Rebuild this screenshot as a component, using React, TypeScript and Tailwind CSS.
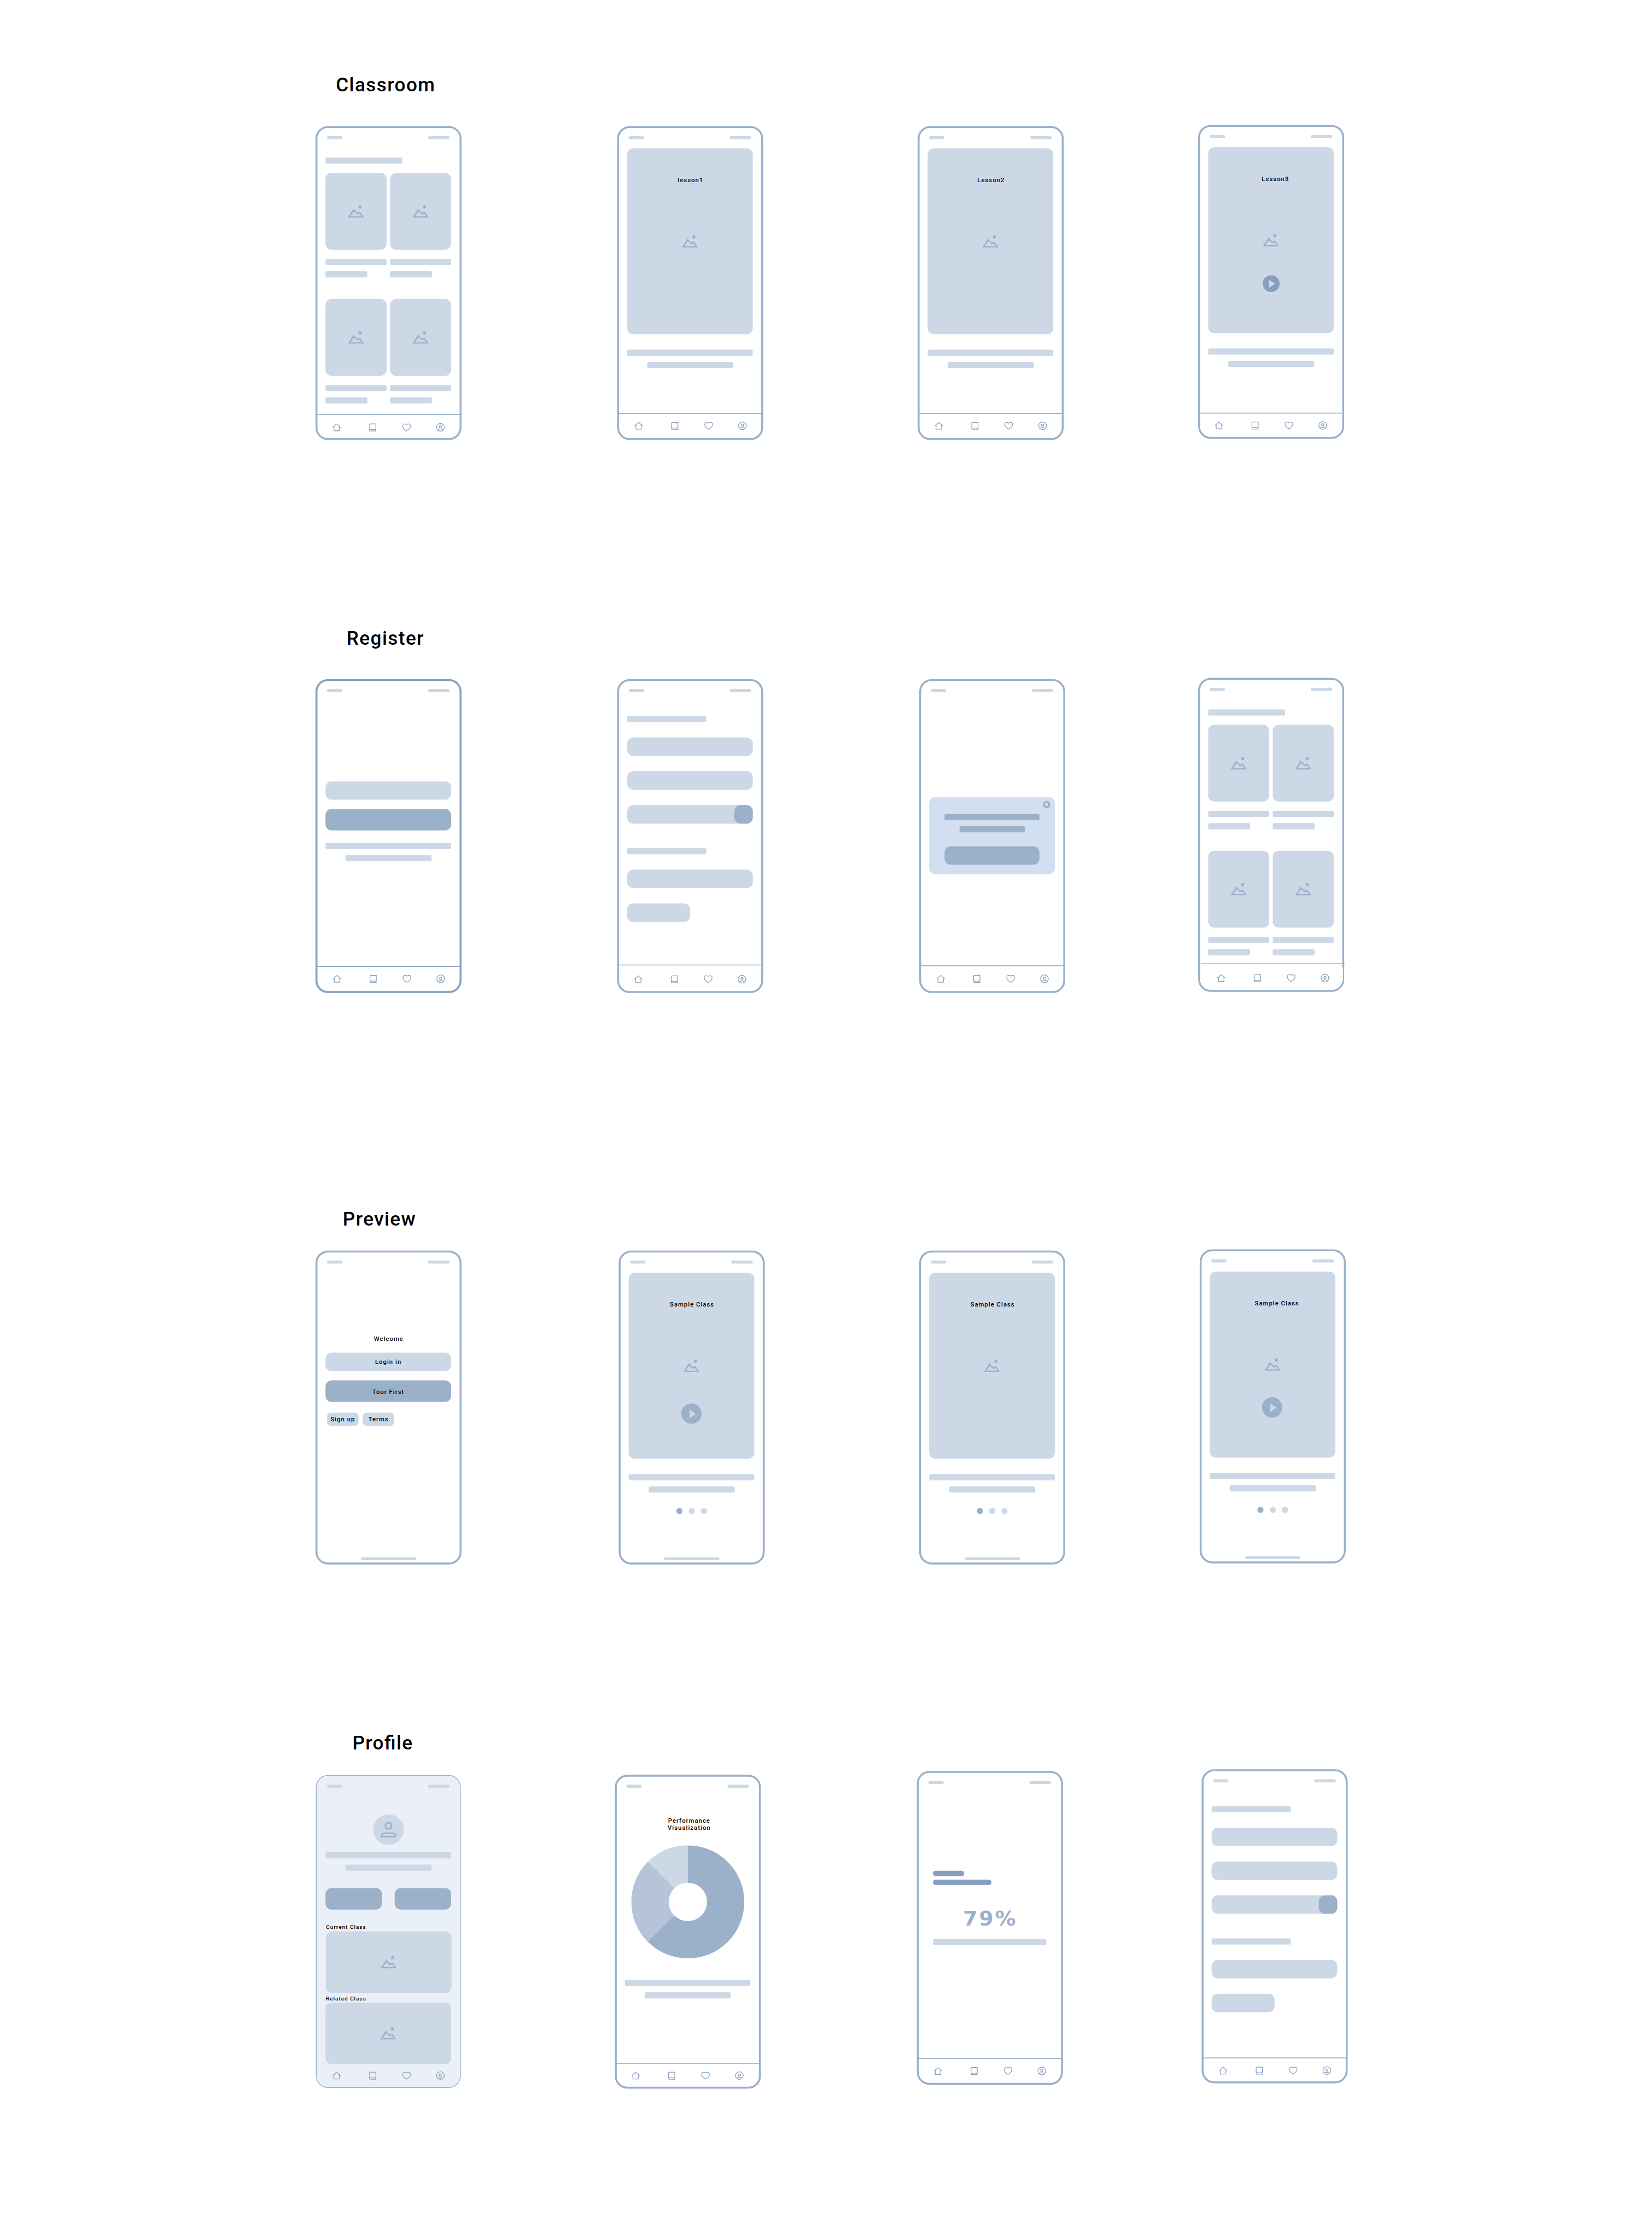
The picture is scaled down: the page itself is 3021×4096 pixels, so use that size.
import type { ReactNode } from "react";
import clsx from "clsx";

/* ---------- icons ---------- */

function PictureIcon() {
  return (
    <svg className="h-[32.6px] w-[42.8px] shrink-0 fill-[#9bb0c9]" viewBox="0 0 42.8 32.6">
      <path
        fillRule="evenodd"
        d="M0 32.6 14.8 9.2 25.2 19.7 31.5 16.3 42.8 32.6ZM6.6 28.7H36.2L30.4 21.1 25 24.2 16 15.6Z"
      />
      <circle cx="31.8" cy="4.1" r="4.1" />
    </svg>
  );
}

function HomeIcon() {
  return (
    <svg className="size-6 fill-none stroke-[#859fbd] stroke-[1.8]" viewBox="0 0 24 24">
      <path d="M1.7 12.2 12 3.2l10.3 9" />
      <path d="M4.9 9.8V21h14.2V9.8" />
    </svg>
  );
}

function BookIcon() {
  return (
    <svg className="size-6 fill-none stroke-[#859fbd] stroke-[1.8]" viewBox="0 0 24 24">
      <path d="M20.2 17.6V3.1H5.6a1.7 1.7 0 0 0-1.7 1.7v14.8" />
      <path d="M21.1 17.6H5.9a1.9 1.9 0 0 0 0 3.8h15.2M19 17.6v3.8" />
    </svg>
  );
}

function HeartIcon() {
  return (
    <svg className="size-6 fill-none stroke-[#859fbd] stroke-[1.8]" viewBox="0 0 24 24">
      <path d="M12 20.9C8 18.8 1.9 14 1.9 8.6 1.9 5 4.6 3 7.5 3c1.8 0 3.3.8 4.5 2.1C13.2 3.8 14.7 3 16.5 3c2.9 0 5.600 2 5.600 5.600C22.100 14 16 18.800 12 20.900Z" />
    </svg>
  );
}

function AccountIcon() {
  return (
    <svg className="size-6 fill-none stroke-[#859fbd] stroke-[1.8]" viewBox="0 0 24 24">
      <circle cx="12" cy="12" r="10.1" />
      <circle cx="12" cy="10.4" r="2.9" />
      <path d="M5 19c1.7-1.7 4.3-2.5 7-2.5s5.300.8 7 2.500" />
    </svg>
  );
}

function Avatar() {
  return (
    <svg className="size-20" viewBox="0 0 80 80">
      <circle cx="40" cy="40" r="40" fill="#ccd8e6" />
      <circle cx="40" cy="30" r="8.2" fill="none" stroke="#9bb0c9" strokeWidth="4" />
      <path
        fill="#9bb0c9"
        fillRule="evenodd"
        d="M20 60V50.5Q40 42.3 60 50.5V60ZM24 56.2H56V53.2Q40 47 24 53.2Z"
      />
    </svg>
  );
}

function PlayIcon({ large = false }: { large?: boolean }) {
  return large ? (
    <svg className="size-[53px]" viewBox="0 0 53 53">
      <circle cx="26.5" cy="26.5" r="26.5" fill="#9bb0c9" />
      <path d="M21.5 15.8 38 27 21.5 38.2Z" fill="#ccd8e6" />
    </svg>
  ) : (
    <svg className="size-11" viewBox="0 0 44 44">
      <circle cx="22" cy="22" r="22" fill="#859fbd" />
      <path d="M16.2 11.4 32 22.2 16.2 33Z" fill="#ccd8e6" />
    </svg>
  );
}

function CloseIcon() {
  return (
    <svg className="size-[19px]" viewBox="0 0 19 19">
      <circle cx="9.5" cy="9.5" r="9.5" fill="#9bb0c9" />
      <path d="m6 6 6.5 6.5M12.5 6 6 12.5" stroke="#fff" strokeWidth="1.9" />
    </svg>
  );
}

/* ---------- building blocks ---------- */

function Bar({ className }: { className: string }) {
  return <div className={clsx("h-4 shrink-0 rounded-[4px] bg-[#ccd8e6]", className)} />;
}

function Block({ className }: { className: string }) {
  return <div className={clsx("shrink-0 rounded-2xl", className)} />;
}

function Label({ className, children }: { className?: string; children: ReactNode }) {
  return (
    <p
      className={clsx(
        "text-base leading-[20px] font-medium tracking-[1.5px] whitespace-nowrap text-black",
        className,
      )}
    >
      {children}
    </p>
  );
}

function TabBar({ className, iconsTop = "pt-[19.5px]" }: { className: string; iconsTop?: string }) {
  return (
    <nav
      className={clsx(
        "absolute flex w-[373px] gap-16 border-t-2 border-[#859fbd] pl-10",
        iconsTop,
        className,
      )}
    >
      <HomeIcon />
      <div className="ml-1.5">
        <BookIcon />
      </div>
      <HeartIcon />
      <AccountIcon />
    </nav>
  );
}

type PhoneProps = {
  className?: string;
  frame?: string;
  nav?: ReactNode;
  home?: boolean;
  children: ReactNode;
};

function Phone({
  className,
  frame = "-inset-[2.5px] rounded-[32.5px] border-[5px] border-[#9bb0c9]",
  nav,
  home = false,
  children,
}: PhoneProps) {
  return (
    <article
      className={clsx("relative flex h-[812px] w-[375px] shrink-0 flex-col rounded-[30px]", className)}
    >
      <div className="flex justify-between px-7 pt-6">
        <div className="h-2 w-10 rounded-full bg-[#ccd8e6]" />
        <div className="h-2 w-14 rounded-full bg-[#ccd8e6]" />
      </div>
      <div className="flex flex-1 flex-col px-6">{children}</div>
      {home && <div className="mb-2 ml-[116px] h-2 w-36 rounded-full bg-[#ccd8e6]" />}
      <div className={clsx("pointer-events-none absolute", frame)} />
      {nav}
    </article>
  );
}

function TwoLines({ className }: { className?: string }) {
  return (
    <div className={className}>
      <Bar className="w-[327px]" />
      <Bar className="mt-4 ml-[52px] w-56" />
    </div>
  );
}

/* ---------- screens ---------- */

function Gallery() {
  return (
    <>
      <Bar className="mt-12 w-[200px]" />
      <div className="mt-6 grid grid-cols-2 gap-x-[9px] gap-y-14">
        {[0, 1, 2, 3].map((card) => (
          <div key={card}>
            <div className="flex h-[200px] items-center justify-center rounded-2xl bg-[#ccd8e6]">
              <PictureIcon />
            </div>
            <Bar className="mt-6" />
            <Bar className="mt-4 w-[109px]" />
          </div>
        ))}
      </div>
    </>
  );
}

type LessonProps = {
  title: string;
  titleShift?: string;
  play?: ReactNode;
  dots?: boolean;
};

function Lesson({ title, titleShift = "ml-[3px]", play, dots = false }: LessonProps) {
  return (
    <>
      <div className="mt-6 flex h-[484px] shrink-0 flex-col items-center rounded-2xl bg-[#ccd8e6] pt-[73px]">
        <Label className={titleShift}>{title}</Label>
        <div className="mt-[132.5px]">
          <PictureIcon />
        </div>
        {play}
      </div>
      <TwoLines className="mt-10" />
      {dots && (
        <div className="mt-10 flex justify-center gap-4">
          <div className="size-4 rounded-full bg-[#9bb0c9]" />
          <div className="size-4 rounded-full bg-[#ccd8e6]" />
          <div className="size-4 rounded-full bg-[#ccd8e6]" />
        </div>
      )}
    </>
  );
}

function SignIn() {
  return (
    <>
      <Block className="mt-[232px] h-12 bg-[#ccd8e6]" />
      <Block className="mt-6 h-14 bg-[#9bb0c9]" />
      <TwoLines className="mt-8" />
    </>
  );
}

function Form() {
  return (
    <>
      <Bar className="mt-[62px] w-[206px]" />
      <Block className="mt-10 h-12 bg-[#ccd8e6]" />
      <Block className="mt-10 h-12 bg-[#ccd8e6]" />
      <div className="mt-10 flex h-12 justify-end rounded-2xl bg-[#ccd8e6]">
        <Block className="size-12 bg-[#9bb0c9]" />
      </div>
      <Bar className="mt-16 w-[206px]" />
      <Block className="mt-10 h-12 bg-[#ccd8e6]" />
      <Block className="mt-10 h-12 w-[164px] bg-[#ccd8e6]" />
    </>
  );
}

function Dialog() {
  return (
    <div className="mt-[273px] flex h-[201px] flex-col rounded-2xl bg-[#d2dff0] px-10 pt-2.5">
      <div className="-mr-7 self-end">
        <CloseIcon />
      </div>
      <div className="mt-[15px] h-4 rounded-[4px] bg-[#9bb0c9]" />
      <div className="mx-auto mt-4 h-4 w-[170px] rounded-[4px] bg-[#9bb0c9]" />
      <Block className="mt-9 h-12 bg-[#9bb0c9]" />
    </div>
  );
}

function Welcome() {
  return (
    <>
      <Label className="mt-[186.5px] ml-0.5 text-center">Welcome</Label>
      <div className="mt-[25.5px] flex h-12 items-center justify-center rounded-2xl bg-[#ccd8e6]">
        <Label>Login in</Label>
      </div>
      <div className="mt-6 flex h-14 items-center justify-center rounded-2xl bg-[#9bb0c9] pt-[5px]">
        <Label>Tour First</Label>
      </div>
      <div className="mt-7 ml-1 flex gap-[11px]">
        <div className="flex h-[34px] w-[82px] items-center justify-center rounded-[10px] bg-[#ccd8e6] pt-[2px]">
          <Label>Sign up</Label>
        </div>
        <div className="flex h-[34px] w-[82px] items-center justify-center rounded-[10px] bg-[#ccd8e6] pt-[2px]">
          <Label>Terms</Label>
        </div>
      </div>
    </>
  );
}

function Profile() {
  return (
    <>
      <div className="mt-[69px] ml-[124px]">
        <Avatar />
      </div>
      <TwoLines className="mt-[19px]" />
      <div className="mt-[45px] flex justify-between">
        <Block className="h-14 w-[147px] bg-[#9bb0c9]" />
        <Block className="h-14 w-[147px] bg-[#9bb0c9]" />
      </div>
      <p className="mt-[35px] ml-[1.5px] text-[14px] leading-[20px] font-medium tracking-[1.5px]">
        Current Class
      </p>
      <div className="mt-[2px] -mr-px ml-px flex h-40 items-center justify-center rounded-2xl bg-[#ccd8e6]">
        <PictureIcon />
      </div>
      <p className="mt-[4px] ml-px text-[14px] leading-[20px] font-medium tracking-[1.5px]">
        Related Class
      </p>
      <div className="mt-px flex h-40 items-center justify-center rounded-2xl bg-[#ccd8e6]">
        <PictureIcon />
      </div>
    </>
  );
}

function Performance() {
  return (
    <>
      <p className="mt-[77px] ml-[8px] text-center text-base leading-[18.75px] font-medium tracking-[1.5px]">
        Performance
        <br />
        Visualization
      </p>
      <svg className="mt-[35.5px] ml-[17px] size-[294px]" viewBox="-147 -147 294 294">
        <circle r="147" fill="#9bb0c9" />
        <path d="M0 0-103.94 103.94A147 147 0 0 1-103.94-103.94Z" fill="#b5c4d8" />
        <path d="M0 0-103.94-103.94A147 147 0 0 1 0-147Z" fill="#ccd8e6" />
        <circle r="50" fill="#fff" />
      </svg>
      <TwoLines className="mt-14" />
    </>
  );
}

function Score() {
  return (
    <div className="px-4">
      <div className="mt-[226px] h-3.5 w-[81px] rounded-full bg-[#859fbd]" />
      <div className="mt-[9px] h-3.5 w-[152px] rounded-full bg-[#859fbd]" />
      <p className="mt-[60px] ml-[78px] font-['DejaVu_Sans',sans-serif] text-[54px] leading-[56px] font-bold tracking-[4px] text-[#9bb0c9]">
        79%
      </p>
      <Bar className="mt-[24px] w-[295px]" />
    </div>
  );
}

function Title({ className, children }: { className: string; children: ReactNode }) {
  return (
    <h2
      className={clsx(
        "text-[50px] leading-[48px] font-medium tracking-[2px] [font-feature-settings:'liga'_1]",
        className,
      )}
    >
      {children}
    </h2>
  );
}

function Row({ className, children }: { className: string; children: ReactNode }) {
  return <div className={clsx("flex items-start pl-[823px]", className)}>{children}</div>;
}

export default function App() {
  return (
    <div className="h-[4096px] w-[3021px] overflow-hidden bg-white">
      <main className="flex h-[5829px] w-[4299px] origin-top-left scale-[0.70272] flex-col bg-white pt-[196.5px] font-['Roboto',sans-serif] text-black">
        <Title className="ml-[874px]">Classroom</Title>
        <Row className="mt-[82.5px]">
          <Phone className="mt-[3px]" nav={<TabBar className="top-[748px] left-px" />}>
            <Gallery />
          </Phone>
          <Phone className="mt-[3px] ml-[410px]" nav={<TabBar className="top-[744.5px] left-[2px]" />}>
            <Lesson title="lesson1" />
          </Phone>
          <Phone className="mt-[3px] ml-[407px]" nav={<TabBar className="top-[744.5px] left-px" />}>
            <Lesson title="Lesson2" />
          </Phone>
          <Phone className="ml-[355px]" nav={<TabBar className="top-[746.5px] left-0" />}>
            <Lesson
              title="Lesson3"
              titleShift="ml-[23px]"
              play={
                <div className="mt-[75px]">
                  <PlayIcon />
                </div>
              }
            />
          </Phone>
        </Row>

        <Title className="mt-[494.5px] ml-[902px]">Register</Title>
        <Row className="mt-[81.5px]">
          <Phone
            className="mt-[3px]"
            frame="-inset-[2.5px] rounded-[32.5px] border-[5px] border-[#859fbd]"
            nav={<TabBar className="top-[744.5px] left-[2px]" />}
          >
            <SignIn />
          </Phone>
          <Phone
            className="mt-[3px] ml-[410px]"
            nav={<TabBar className="top-[740.5px] left-px" iconsTop="pt-[24.5px]" />}
          >
            <Form />
          </Phone>
          <Phone
            className="mt-[3px] ml-[411px]"
            nav={<TabBar className="top-[742.5px] left-[2px]" iconsTop="pt-[21.5px]" />}
          >
            <Dialog />
          </Phone>
          <Phone
            className="ml-[351px]"
            nav={
              <>
                <div className="absolute top-[741px] left-[200px] h-[68px] w-[175px] rounded-tr-[18px] rounded-br-[30px] bg-white" />
                <TabBar className="top-[740.5px] left-[6px]" iconsTop="pt-[24.5px]" />
              </>
            }
          >
            <Gallery />
          </Phone>
        </Row>

        <Title className="mt-[566.5px] ml-[892px]">Preview</Title>
        <Row className="mt-[57.5px]">
          <Phone className="mt-[3px]" home>
            <Welcome />
          </Phone>
          <Phone className="mt-[3px] ml-[414px]" home>
            <Lesson
              title="Sample Class"
              dots
              play={
                <div className="mt-[82px]">
                  <PlayIcon large />
                </div>
              }
            />
          </Phone>
          <Phone className="mt-[3px] ml-[407px]" home>
            <Lesson title="Sample Class" dots />
          </Phone>
          <Phone className="ml-[355px]" home>
            <Lesson
              title="Sample Class"
              titleShift="ml-[23px]"
              dots
              play={
                <div className="mt-[69px] mr-[2px]">
                  <PlayIcon large />
                </div>
              }
            />
          </Phone>
        </Row>

        <Title className="mt-[442.5px] ml-[917px]">Profile</Title>
        <Row className="mt-[47.5px]">
          <Phone
            className="mt-[14px] bg-[#ebf0f8]"
            frame="-inset-px rounded-[31px] border-2 border-[#9bb0c9]"
            nav={<TabBar className="top-[747px] left-px border-transparent" />}
          >
            <Profile />
          </Phone>
          <Phone className="mt-[14px] ml-[404px]" nav={<TabBar className="top-[747.5px] left-0" />}>
            <Performance />
          </Phone>
          <Phone className="mt-[4px] ml-[411px]" nav={<TabBar className="top-[745.5px] left-px" />}>
            <Score />
          </Phone>
          <Phone className="ml-[366px]" nav={<TabBar className="top-[748px] left-[2px]" />}>
            <Form />
          </Phone>
        </Row>
      </main>
    </div>
  );
}
